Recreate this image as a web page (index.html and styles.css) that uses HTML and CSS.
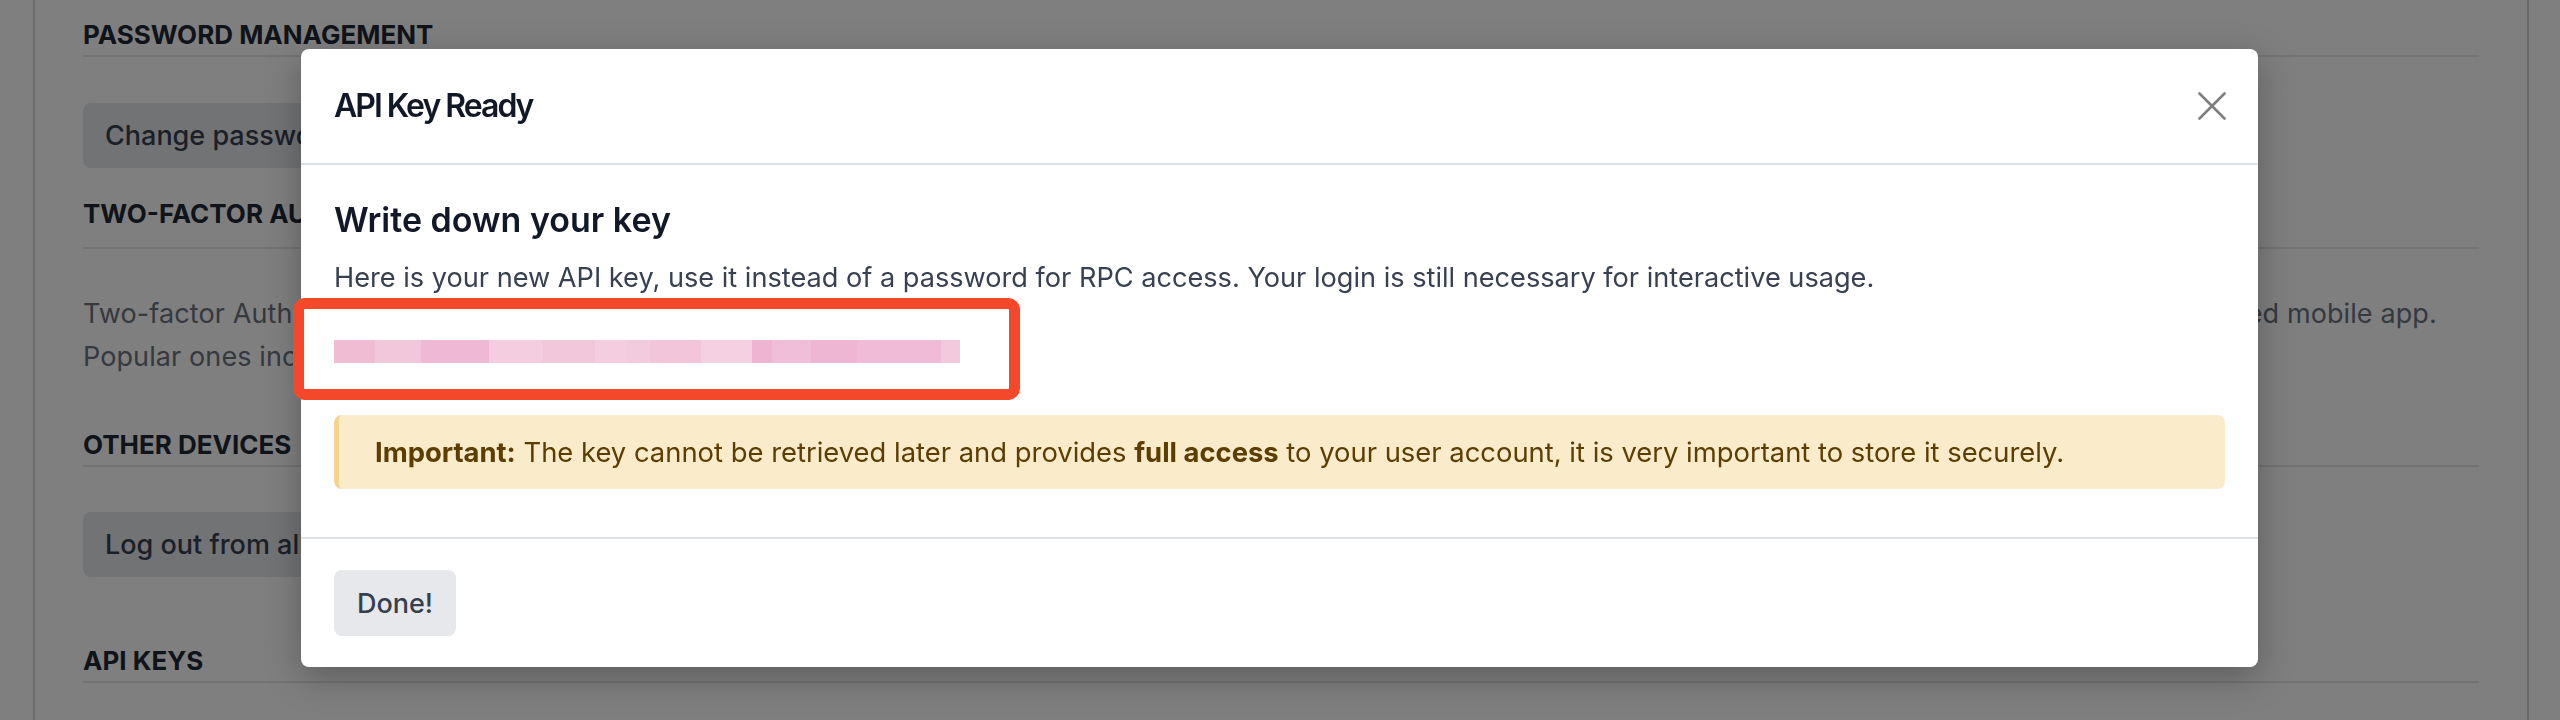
FILE: index.html
```html
<!DOCTYPE html>
<html lang="en">
<head>
<meta charset="utf-8">
<title>API Key Ready</title>
<link rel="stylesheet" href="styles.css">
</head>
<body>
<div class="page">
  <section class="section">
    <h3 class="sec-title">Password Management</h3>
    <button class="btn btn-change">Change password</button>
  </section>
  <section class="section">
    <h3 class="sec-title sec-title-tall">Two-factor Authentication</h3>
    <p class="sec-text">Two-factor Authentication ("2FA") is a system of double authentication. The first one is done with your password and the second one with a code you get from a dedicated mobile app. Popular ones include Authy, Google Authenticator or the Microsoft Authenticator.</p>
  </section>
  <section class="section">
    <h3 class="sec-title sec-title-3">Other Devices</h3>
    <button class="btn btn-logout">Log out from all devices</button>
  </section>
  <section class="section">
    <h3 class="sec-title sec-title-4">API Keys</h3>
  </section>
</div>

<div class="backdrop"></div>

<div class="modal" role="dialog">
  <header class="modal-header">
    <h4 class="modal-title">API Key Ready</h4>
    <button class="close" aria-label="Close">
      <svg width="28" height="28" viewBox="0 0 28 28"><path d="M1.5 1.5 L26.5 26.5 M26.5 1.5 L1.5 26.5" stroke="#7f7f7f" stroke-width="2.6" stroke-linecap="round" fill="none"/></svg>
    </button>
  </header>
  <div class="modal-body">
    <h3 class="body-title">Write down your key</h3>
    <p class="body-text">Here is your new API key, use it instead of a password for RPC access. Your login is still necessary for interactive usage.</p>
    <div class="key-bar" aria-label="API key (redacted)"></div>
    <div class="alert"><strong>Important:</strong> The key cannot be retrieved later and provides <strong>full access</strong> to your user account, it is very important to store it securely.</div>
    <div class="highlight"></div>
  </div>
  <footer class="modal-footer">
    <button class="btn-done">Done!</button>
  </footer>
</div>
</body>
</html>
```

FILE: styles.css
```css
* { box-sizing: border-box; }

html, body {
  margin: 0;
  padding: 0;
  width: 2560px;
  height: 720px;
  overflow: hidden;
  background: #ffffff;
  font-family: Inter, "Noto Sans", "Liberation Sans", sans-serif;
}

/* ---------- background page ---------- */
.page {
  margin-left: 33px;
  width: 2496px;
  height: 720px;
  border-left: 2px solid #d6d6d6;
  border-right: 2px solid #d6d6d6;
  padding: 19px 48px 0 48px;
  display: flex;
  flex-direction: column;
}

.section {
  display: flex;
  flex-direction: column;
  align-items: flex-start;
}

.sec-title {
  align-self: stretch;
  margin: 0;
  font-size: 26px;
  line-height: 32px;
  font-weight: 700;
  text-transform: uppercase;
  color: #1f2937;
  padding-bottom: 4px;
  border-bottom: 2px solid #e6e6e6;
}

.sec-title-tall { margin-top: 30px; padding-bottom: 17px; }
.sec-title-3 { margin-top: 51px; }
.sec-title-4 { margin-top: 68px; }

.btn {
  border: none;
  border-radius: 8px;
  background: #e5e7eb;
  color: #374151;
  font-family: inherit;
  font-size: 27px;
  height: 65px;
  padding: 0 22px;
  font-weight: 500;
}
.btn-change { margin-top: 46px; }
.btn-logout { margin-top: 45px; }

.sec-text {
  margin: 43px 0 0 0;
  font-size: 27px;
  letter-spacing: 0.1px;
  line-height: 43px;
  color: #6b7280;
}

.backdrop {
  position: fixed;
  inset: 0;
  background: rgba(0, 0, 0, 0.5);
}

/* ---------- modal ---------- */
.modal {
  position: absolute;
  left: 301px;
  top: 49px;
  width: 1957px;
  background: #ffffff;
  border-radius: 8px;
  box-shadow: 0 10px 36px rgba(0, 0, 0, 0.28);
  display: flex;
  flex-direction: column;
}

.modal-header {
  height: 116px;
  padding: 0 32px 0 33px;
  display: flex;
  align-items: center;
  justify-content: space-between;
  border-bottom: 2px solid #dee2e6;
}

.modal-title {
  margin: 0;
  font-size: 32px;
  line-height: 40px;
  font-weight: 600;
  letter-spacing: -2px;
  color: #111827;
}

.close {
  border: none;
  background: none;
  padding: 0;
  width: 28px;
  height: 28px;
  display: flex;
}

.modal-body {
  position: relative;
  padding: 35px 33px 48px 33px;
  display: flex;
  flex-direction: column;
}

.body-title {
  margin: 0;
  font-size: 34px;
  line-height: 40px;
  font-weight: 600;
  color: #111827;
}

.body-text {
  margin: 19px 0 0 0;
  font-size: 27.15px;
  line-height: 38px;
  color: #374151;
}

.key-bar {
  margin-top: 43px;
  width: 626px;
  height: 23px;
  background: linear-gradient(90deg,
    #efbcd4 0 41px,
    #f2c7dc 41px 87px,
    #efb9d3 87px 155px,
    #f4cde0 155px 209px,
    #f2c6db 209px 261px,
    #f4cde0 261px 293px,
    #f3cbdf 293px 316px,
    #f2c5da 316px 367px,
    #f5d0e2 367px 418px,
    #efb5d0 418px 438px,
    #f0bed6 438px 477px,
    #efb6d1 477px 523px,
    #f0bcd5 523px 607px,
    #f3c9dd 607px 626px);
}

.alert {
  margin-top: 52px;
  height: 74px;
  padding: 18px 36px;
  font-size: 27.4px;
  line-height: 38px;
  color: #5c3d02;
  background: #faebcb;
  border-left: 5px solid #f4d590;
  border-radius: 8px;
}
.alert strong { font-weight: 700; }

/* annotation drawn over the key */
.highlight {
  position: absolute;
  left: -8px;
  top: 133px;
  width: 727px;
  height: 102px;
  border: 11px solid #f4482a;
  border-radius: 12px;
}

.modal-footer {
  border-top: 2px solid #dee2e6;
  padding: 31px 33px;
  display: flex;
}

.btn-done {
  border: none;
  border-radius: 8px;
  background: #e6e8ec;
  color: #353f4f;
  font-family: inherit;
  font-size: 27px;
  font-weight: 500;
  height: 66px;
  width: 122px;
  padding: 0;
}
```
